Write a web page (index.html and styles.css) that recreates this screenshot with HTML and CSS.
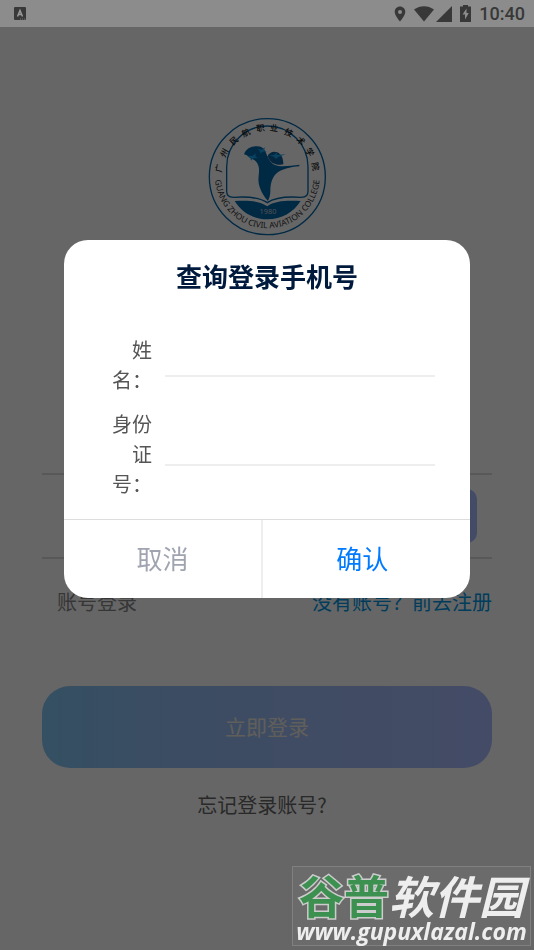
FILE: index.html
```html
<!DOCTYPE html>
<html lang="zh-CN">
<head>
<meta charset="utf-8">
<meta name="viewport" content="width=device-width, initial-scale=1">
<title>登录</title>
<link rel="stylesheet" href="styles.css">
</head>
<body>

<div class="status">
  <svg class="app" viewBox="0 0 12 13"><rect width="12" height="13" rx="1" fill="#383838"/><path d="M3.5 9.500L6 3.500L8.500 9.500M4.500 7.500H7.500" fill="none" stroke="#999" stroke-width="1.500"/><path d="M6 12H11" stroke="#777" stroke-dasharray="1 1"/></svg>
  <div class="icons">
    <svg width="12" height="16" viewBox="0 0 12 16"><path fill-rule="evenodd" d="M6 0.500C3 .5 .7 2.800.7 5.800C.7 9.700 6 15.500 6 15.500S11.300 9.700 11.300 5.800C11.300 2.800 9 .5 6 .5ZM6 4A2 2 0 1 1 6 8A2 2 0 1 1 6 4Z"/></svg>
    <svg width="20" height="16" viewBox="0 0 20 16"><path d="M0 3.500C6-1 14-1 20 3.500L10 15.500Z"/></svg>
    <svg width="16" height="16" viewBox="0 0 16 16"><path d="M16 0V16H0Z"/></svg>
    <svg class="battery" width="11" height="17" viewBox="0 0 11 17"><path fill-rule="evenodd" d="M3 0H8V1.500H11V17H0V1.500H3ZM6.500 3.500L2.500 9.500H5V14.500L8.800 8H6.500Z"/></svg>
    <span>10:40</span>
  </div>
</div>

<main class="page">
  <svg class="logo" viewBox="0 0 402 402">
    <defs><path id="ring" d="M46 180A157 157 0 1 0 358 180"/></defs>
    <circle cx="202" cy="200" r="174" fill="none" stroke="#0067ab" stroke-width="4"/>
    <path d="M102 262C84 261 79 255 80 240V170A122 122 0 0 1 324 170V240C325 255 320 261 302 262C260 259 225 262 202 278C179 262 144 259 102 262Z" fill="none" stroke="#0067ab" stroke-width="4"/>
    <path d="M104 273C145 271 180 272 202 289C224 272 259 271 302 273C280 307 245 328 202 328C159 328 126 307 104 273Z" fill="#0067ab"/>
    <path d="M132 133C138 116 154 108 172 109C187 109 194 118 199 131C206 149 214 163 232 167C252 171 276 166 298 164V169C270 171 244 178 230 190C214 204 211 226 211 244C211 256 208 265 204 273C194 262 182 244 177 224C172 204 180 188 176 170C172 154 162 148 150 144C145 139 139 134 132 133Z" fill="#0067ab"/>
    <path d="M203 139C208 127 219 123 232 127C244 133 250 145 250 163C238 166 226 163 216 158C210 153 206 147 203 139Z" fill="#0b5f9d"/>
    <path d="M140 137L157 138L168 130L166 139L173 144L160 145L153 152L151 143ZM172 117L184 119L196 112L191 121L200 125L187 125L181 131L180 123ZM207 136L222 135L231 127L230 135L257 133L236 140L228 147L222 140Z" fill="#18a5ec"/>
    <g class="cn">
      <text transform="translate(202 200) rotate(-80)" y="-138">广</text>
      <text transform="translate(202 200) rotate(-61)" y="-138">州</text>
      <text transform="translate(202 200) rotate(-43)" y="-138">民</text>
      <text transform="translate(202 200) rotate(-26)" y="-138">航</text>
      <text transform="translate(202 200) rotate(-8)" y="-138">职</text>
      <text transform="translate(202 200) rotate(8)" y="-138">业</text>
      <text transform="translate(202 200) rotate(26)" y="-138">技</text>
      <text transform="translate(202 200) rotate(43)" y="-138">术</text>
      <text transform="translate(202 200) rotate(60)" y="-138">学</text>
      <text transform="translate(202 200) rotate(78)" y="-138">院</text>
    </g>
    <text class="en"><textPath href="#ring" startOffset="50%">GUANG ZHOU CIVIL AVIATION COLLEGE</textPath></text>
    <text class="year" x="204" y="311">1980</text>
  </svg>

  <form class="login">
    <div class="row"><input type="tel" aria-label="手机号"></div>
    <div class="row"><input type="text" aria-label="验证码"><button type="button" class="code" aria-label="获取验证码"></button></div>
    <div class="links"><a class="gray" href="#">账号登录</a><a href="#">没有账号？前去注册</a></div>
    <button type="button" class="submit">立即登录</button>
    <a class="forget" href="#">忘记登录账号?</a>
  </form>
</main>

<div class="mask">
  <form class="modal" role="dialog" aria-labelledby="title">
    <h1 id="title">查询登录手机号</h1>
    <div class="fields">
      <div class="field"><label for="name">姓 名：</label><input id="name" type="text"></div>
      <div class="field"><label for="idno">身份证 号：</label><input id="idno" type="text"></div>
    </div>
    <div class="actions">
      <button type="button" class="cancel">取消</button>
      <button type="button" class="ok">确认</button>
    </div>
  </form>
</div>

<div class="mark">
  <div class="name"><span>谷普</span>软件园</div>
  <div class="url">www.gupuxlazal.com</div>
</div>

</body>
</html>
```

FILE: styles.css
```css
* {box-sizing: border-box;}
body {margin: 0; min-height: 100vh; background: white; color: #555;
  font: 20px/30px "Noto Sans CJK SC", sans-serif;}
button, input {font: inherit; border: 0; background: none; padding: 0; margin: 0; min-width: 0;}
a {color: #0098e6; text-decoration: none;}

.status {height: 27px; padding: 0 9px 0 14px; background: #8c8c8c; color: #383838;
  display: flex; align-items: center; justify-content: space-between;
  font: 500 18px/27px Roboto, sans-serif;}
.status svg {fill: #383838;}
.app {width: 12px; height: 13px;}
.icons {display: flex; align-items: center; gap: 2px;}
.icons svg:first-child {margin-right: 6px;}
.battery {margin: 0 6px;}

.page {padding: 83px 42px 0;}
.logo {display: block; width: 134px; height: 134px; margin: 0 auto;}
.logo text {text-anchor: middle;}
.cn {font: 500 25px "Noto Sans CJK SC", sans-serif; fill: #111;}
.en {font: 25px "Noto Sans", sans-serif; fill: #333;}
.year {font: 22px "Noto Sans", sans-serif; fill: #ccc;}

.login {display: flex; flex-direction: column; margin-top: 147px;}
.row {display: flex; align-items: center; height: 84px; padding-right: 15px;
  border-bottom: 2px solid #ddd;}
.row input {flex: 1; height: 54px;}
.code {width: 150px; height: 54px; border-radius: 10px; background: linear-gradient(90deg, #84c8fa, #a8bcff);}
.links {display: flex; justify-content: space-between; margin-top: 28px; padding-left: 15px;}
.gray {color: #888;}
.submit {height: 82px; margin-top: 69px; padding-bottom: 2px; border-radius: 28px; color: #f0ece4; font-size: 21px;
  background: linear-gradient(90deg, #84c8f4, #90c0f8 20%, #a0bef8 60%, #aabcff);}
.forget {align-self: center; margin-top: 22px; padding-right: 10px; color: #666;}

.mask {position: fixed; inset: 27px 0 0; background: rgba(0,0,0,.6);
  display: flex; justify-content: center; align-items: flex-start; padding-top: 213px;}
.modal {width: 76%; background: white; border-radius: 24px; overflow: hidden;}
.modal h1 {margin: 0; padding-top: 16px; text-align: center; color: #001a3d; font-size: 26px; line-height: 40px;}
.fields {padding: 39px 35px 20px 48px;}
.field {display: flex; align-items: center; gap: 13px; margin-bottom: 14px;}
.field:last-child {margin: 0;}
.field label {width: 40px; text-align: right;}
.field input {flex: 1; height: 24px; border-bottom: 2px solid #eee;}
.actions {display: flex; border-top: 1px solid #ddd;}
.actions button {width: 49%; height: 78px; padding-bottom: 2px; font-size: 26px;}
.cancel {color: #a0a4b0;}
.actions .cancel {border-right: 2px solid #eee;}
.ok {color: #007aff;}

.mark {position: fixed; right: 3px; bottom: 4px; width: 239px; height: 80px;
  padding-top: 5px; border: 1px solid #808080; background: #6b6b6b; color: #eee;
  text-align: center; font-style: italic; white-space: nowrap;}
.name {font-size: 45px; font-weight: 700; line-height: 46px;}
.name span {font-style: normal; color: #3d9150; -webkit-text-stroke: 3px #ccc; paint-order: stroke fill;}
.url {font: italic 700 23px/27px "Open Sans", sans-serif;}
```
